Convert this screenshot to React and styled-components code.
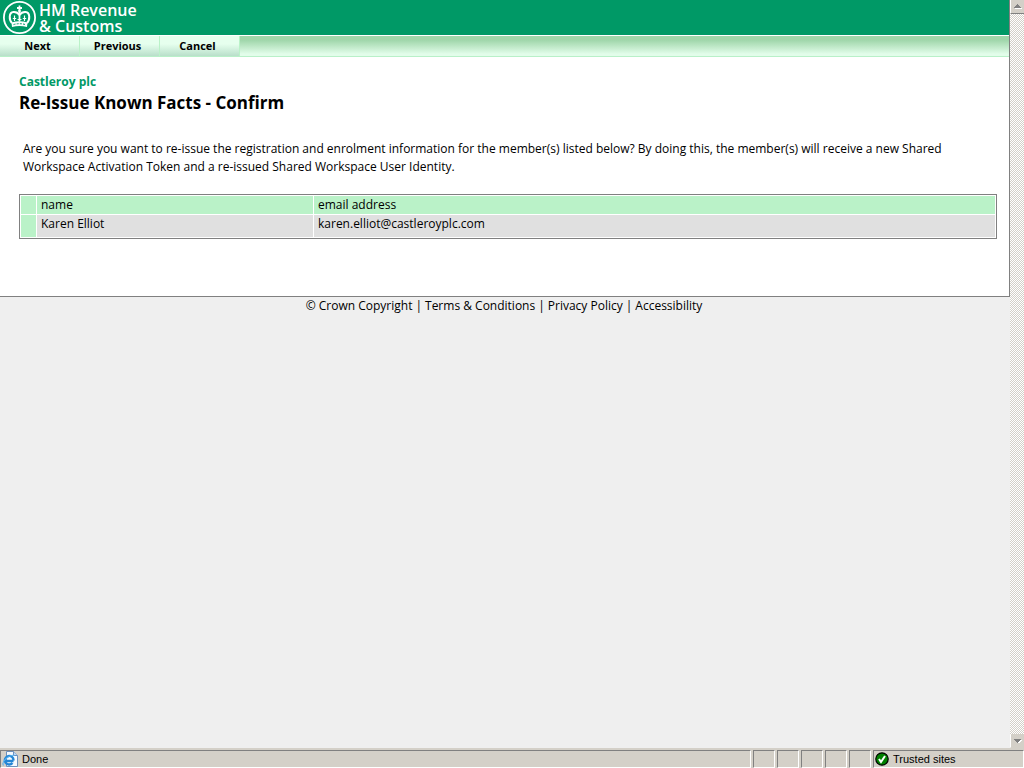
import React from 'react';
import styled, { createGlobalStyle } from 'styled-components';

const GlobalStyle = createGlobalStyle`
    * {
        box-sizing: border-box;
    }

    body {
        margin: 0;
        background: #efefef;
        color: #000;
        font-family: "Open Sans", sans-serif;
        font-size: 12px;
        line-height: 18px;
    }
`

const Window = styled.div`
    display: flex;
    flex-direction: column;
    height: 100vh;
    background: #efefef;
`

const Viewport = styled.div`
    display: flex;
    flex: 1;
    min-height: 0;
`

const Page = styled.div`
    flex: 1;
    min-width: 0;
`

const Sheet = styled.div`
    background: #fff;
    border-right: 1px solid #808080;
    border-bottom: 1px solid #808080;
`

const Header = styled.header`
    display: flex;
    align-items: center;
    gap: 2px;
    height: 35px;
    padding-left: 2px;
    background: #009966;
`

const Brand = styled.div`
    color: #fff;
    font-size: 16px;
    font-weight: 600;
    line-height: 16px;
    white-space: nowrap;
`

const Toolbar = styled.nav`
    display: flex;
    height: 22px;
    border-top: 1px solid #fff;
    border-bottom: 1px solid #b9f0c9;
    background: linear-gradient(#9fd6aa 20%, #e2fdea 90%);
`

const ToolbarButton = styled.button`
    width: 80px;
    padding: 0 4px 0 0;
    border: 0;
    border-right: 1px solid #baf2c8;
    background: linear-gradient(#e6ffee 40%, #b9dfca);
    color: #000;
    font-family: "Open Sans", sans-serif;
    font-size: 11px;
    font-weight: 700;
    line-height: 18px;
`

const Content = styled.main`
    padding: 16px 12px 57px 19px;
`

const Company = styled.div`
    color: #009966;
    font-weight: 700;
`

const Title = styled.h1`
    margin: 0;
    font-size: 17px;
    font-weight: 700;
    line-height: 24px;
`

const Message = styled.p`
    margin: 25px 4px 18px;
`

const Members = styled.table`
    width: 100%;
    border: 1px solid #808080;
    border-collapse: separate;
    border-spacing: 1px;
    table-layout: fixed;
`

const Cell = styled.td`
    width: ${props => props.$width};
    height: ${props => props.$tall ? '22px' : '18px'};
    padding: 0 4px;
    background: ${props => props.$shaded ? '#e0e0e0' : '#baf2c8'};
    font-weight: 400;
    text-align: left;
    vertical-align: top;
`

const Footer = styled.footer`
    display: flex;
    justify-content: center;
    gap: 3px;
    padding-right: 2px;
`

const FooterLink = styled.a`
    color: #000;
    text-decoration: none;
`

const ScrollBar = styled.div`
    display: flex;
    flex-direction: column;
    justify-content: space-between;
    width: 14px;
    background: repeating-conic-gradient(#d4d0c8 0 25%, #fff 0 50%) 0 0 / 2px 2px;
`

const ScrollButton = styled.button`
    display: flex;
    align-items: center;
    justify-content: center;
    height: 14px;
    padding: 0;
    border: 0;
    border-left: 1px solid #fff;
    border-bottom: 1px solid ${props => props.$flat ? '#d4d0c8' : '#808080'};
    background: #d4d0c8;
`

const StatusBar = styled.div`
    display: flex;
    gap: 2px;
    height: 20px;
    padding-top: 2px;
    background: #d4d0c8;
    font-family: "Liberation Sans", sans-serif;
    font-size: 11px;
    line-height: 16px;
`

const Panel = styled.div`
    display: flex;
    align-items: center;
    gap: 4px;
    flex: ${props => props.$grow ? '1' : 'none'};
    width: ${props => props.$width || '22px'};
    padding-left: 1px;
    border: 1px solid #808080;
    border-right-color: #fff;
    border-bottom-color: #fff;
`

const Crown = () => (
    <svg width="35" height="35" viewBox="0 0 35 35" aria-hidden="true">
        <circle cx="17.5" cy="17.5" r="15.6" fill="none" stroke="#fff" strokeWidth="1.8" />
        <g fill="none" stroke="#fff">
            <path d="M10 23C7 20 6.500 12.500 11.500 12C14.500 11.800 16.500 13.500 17.500 15C18.500 13.500 20.500 11.800 23.500 12C28.500 12.500 28 20 25 23" strokeWidth="2" />
            <path d="M17.500 11.500V21.500" strokeWidth="1.800" />
            <path d="M12.500 15.500V21M22.500 15.500V21M10.800 18.500H14.200M20.800 18.500H24.200M15.500 19.500H19.500" strokeWidth="1.200" />
            <path d="M17.500 5.500V10.500M15 8H20" strokeWidth="1.800" />
        </g>
        <circle cx="17.5" cy="11" r="1.4" fill="#fff" />
        <path d="M9.500 22.500Q17.500 20 25.500 22.500L25 27Q17.500 25 10 27Z" fill="#fff" />
        <path d="M11.500 24.600Q17.500 22.800 23.500 24.600" fill="none" stroke="#009966" strokeWidth="1" strokeDasharray="2 1.200" />
    </svg>
)

const ExplorerIcon = () => (
    <svg width="16" height="16" viewBox="0 0 16 16" aria-hidden="true">
        <path d="M4.500 .5H11.500L15.500 4.500V15.500H4.500Z" fill="#f5faff" stroke="#6d91bd" />
        <path d="M11.500 .5V4.500H15.500" fill="#bcd8f5" stroke="#6d91bd" />
        <path d="M11.500 10H3.500M11.500 9.500A4.300 4.300 0 1 0 10.500 12" fill="none" stroke="#2486d5" strokeWidth="2.400" />
        <path d="M1.500 14.500C-1 11 7 3 12.500 4.500" fill="none" stroke="#59b2ee" strokeWidth="1.200" />
    </svg>
)

const TrustedIcon = () => (
    <svg width="14" height="14" viewBox="0 0 14 14" aria-hidden="true">
        <circle cx="7" cy="7" r="6.2" fill="#008000" stroke="#000" strokeWidth="1.200" />
        <path d="M4 7L6 10L10 4" fill="none" stroke="#fff" strokeWidth="2" />
    </svg>
)

const Arrow = ({down}) => (
    <svg width="8" height="6" viewBox="0 0 8 6" aria-hidden="true" shapeRendering="crispEdges">
        <path d={down ? 'M2 2H8L5 6Z' : 'M1 4H8V5H1Z'} fill="#fff" />
        <path d={down ? 'M0 1H7L4 5H3Z' : 'M0 4L3 0H4L7 4Z'} fill="#808080" />
    </svg>
)

const members = [
    {name: 'Karen Elliot', email: 'karen.elliot@castleroyplc.com'},
];

const App = () => {
    return (
        <Window>
            <GlobalStyle />
            <Viewport>
                <Page>
                    <Sheet>
                        <Header>
                            <Crown />
                            <Brand>HM Revenue<br />&amp; Customs</Brand>
                        </Header>
                        <Toolbar>
                            <ToolbarButton>Next</ToolbarButton>
                            <ToolbarButton>Previous</ToolbarButton>
                            <ToolbarButton>Cancel</ToolbarButton>
                        </Toolbar>
                        <Content>
                            <Company>Castleroy plc</Company>
                            <Title>Re-Issue Known Facts - Confirm</Title>
                            <Message>
                                Are you sure you want to re-issue the registration and enrolment information for the member(s) listed below? By doing this, the member(s) will receive a new Shared Workspace Activation Token and a re-issued Shared Workspace User Identity.
                            </Message>
                            <Members>
                                <thead>
                                    <tr>
                                        <Cell $width="15px" />
                                        <Cell as="th" scope="col" $width="276px">name</Cell>
                                        <Cell as="th" scope="col">email address</Cell>
                                    </tr>
                                </thead>
                                <tbody>
                                    {members.map(member => (
                                        <tr key={member.email}>
                                            <Cell $tall />
                                            <Cell $tall $shaded>{member.name}</Cell>
                                            <Cell $tall $shaded>{member.email}</Cell>
                                        </tr>
                                    ))}
                                </tbody>
                            </Members>
                        </Content>
                    </Sheet>
                    <Footer>
                        <span>© Crown Copyright</span>
                        <span>|</span>
                        <FooterLink href="#terms">Terms &amp; Conditions</FooterLink>
                        <span>|</span>
                        <FooterLink href="#privacy">Privacy Policy</FooterLink>
                        <span>|</span>
                        <FooterLink href="#accessibility">Accessibility</FooterLink>
                    </Footer>
                </Page>
                <ScrollBar>
                    <ScrollButton aria-label="Scroll up"><Arrow /></ScrollButton>
                    <ScrollButton aria-label="Scroll down" $flat><Arrow down /></ScrollButton>
                </ScrollBar>
            </Viewport>
            <StatusBar>
                <Panel $grow><ExplorerIcon />Done</Panel>
                <Panel />
                <Panel />
                <Panel />
                <Panel />
                <Panel />
                <Panel $width="151px"><TrustedIcon />Trusted sites</Panel>
            </StatusBar>
        </Window>
    );
};

export default App;
